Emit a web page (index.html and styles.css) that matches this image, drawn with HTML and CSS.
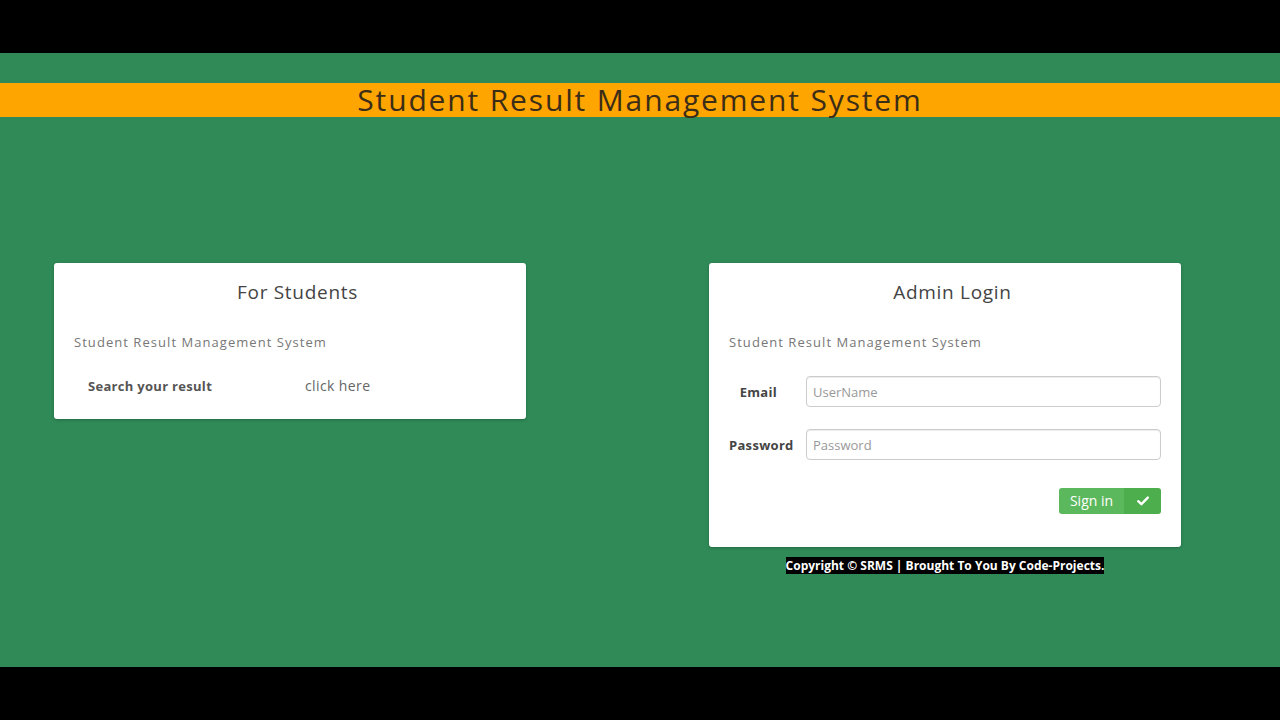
FILE: index.html
```html
<!DOCTYPE html>
<html>
<head>
<meta charset="utf-8">
<link rel="stylesheet" href="styles.css">
</head>
<body>
<div class="bar"></div>
<main class="page">
  <h1 class="banner">Student Result Management System</h1>
  <div class="cards">
    <section class="card student">
      <h2 class="card-title">For Students</h2>
      <p class="card-sub">Student Result Management System</p>
      <div class="search-row">
        <span class="search-label">Search your result</span>
        <a class="search-link">click here</a>
      </div>
    </section>
    <div class="admin-col">
      <section class="card admin">
        <h2 class="card-title">Admin Login</h2>
        <p class="card-sub">Student Result Management System</p>
        <div class="form-row email-row">
          <label class="form-label">Email</label>
          <input class="form-input" type="text" placeholder="UserName">
        </div>
        <div class="form-row pass-row">
          <label class="form-label">Password</label>
          <input class="form-input" type="password" placeholder="Password">
        </div>
        <div class="btn-row">
          <button class="btn-sign"><span class="btn-text">Sign in</span><span class="btn-icon"><svg width="12" height="10" viewBox="0 0 12 10"><path d="M1.2 5.2 L4.4 8.2 L10.8 1.6" fill="none" stroke="#fff" stroke-width="2.4" stroke-linecap="round" stroke-linejoin="round"/></svg></span></button>
        </div>
      </section>
      <p class="copyright"><span class="copy-mark">Copyright © SRMS | Brought To You By Code-Projects.</span></p>
    </div>
  </div>
</main>
<div class="bar"></div>
</body>
</html>
```
FILE: styles.css
```css
html, body {
  margin: 0;
  padding: 0;
  background: #000;
}
body {
  width: 1280px;
  height: 720px;
  overflow: hidden;
  font-family: "Open Sans", "Noto Sans", sans-serif;
}
.bar {
  height: 53px;
  background: #000;
}
.page {
  height: 614px;
  background: #2f8a57;
  padding-top: 30px;
  box-sizing: border-box;
}
.banner {
  margin: 0;
  height: 34px;
  background: #ffa500;
  text-align: center;
  font-weight: 400;
  font-size: 30px;
  line-height: 34px;
  color: #3b2d17;
  letter-spacing: 1.85px;
}
.cards {
  display: flex;
  align-items: flex-start;
  padding-left: 54px;
  gap: 183px;
  margin-top: 146px;
}
.card {
  width: 472px;
  background: #fff;
  border-radius: 3px;
  box-shadow: 0 1px 3px rgba(0,0,0,0.25);
  box-sizing: border-box;
  padding: 16px 20px 0 20px;
}
.card-title {
  margin: 0;
  text-align: center;
  font-weight: 400;
  font-size: 19px;
  line-height: 26px;
  color: #444;
  letter-spacing: 0.7px;
  padding-left: 15px;
}
.card-sub {
  margin: 28px 0 0 0;
  font-size: 13px;
  line-height: 18px;
  color: #777;
  letter-spacing: 1.05px;
}
.student {
  height: 156px;
}
.search-row {
  display: flex;
  margin-top: 25px;
  padding-left: 14px;
  align-items: center;
}
.search-label {
  width: 217px;
  font-weight: 700;
  font-size: 13px;
  color: #555;
  letter-spacing: 0.3px;
}
.search-link {
  font-size: 14px;
  color: #666;
  letter-spacing: 0.4px;
}
.admin {
  height: 284px;
}
.form-row {
  display: flex;
  align-items: center;
}
.email-row {
  margin-top: 25px;
}
.pass-row {
  margin-top: 22px;
}
.form-label {
  text-align: right;
  box-sizing: border-box;
  width: 77px;
  font-weight: 700;
  font-size: 13px;
  color: #444;
  letter-spacing: 0.3px;
}
.email-row .form-label {
  padding-right: 29px;
}
.pass-row .form-label {
  text-align: left;
  padding-right: 0;
}
.form-input {
  width: 355px;
  height: 31px;
  box-sizing: border-box;
  border: 1px solid #ccc;
  border-radius: 4px;
  padding: 0 6px;
  font-family: inherit;
  font-size: 13px;
  color: #555;
  box-shadow: inset 0 1px 1px rgba(0,0,0,0.075);
}
.form-input::placeholder {
  color: #999;
}
.btn-row {
  display: flex;
  justify-content: flex-end;
  margin-top: 28px;
}
.btn-sign {
  display: flex;
  height: 26px;
  padding: 0;
  border: none;
  border-radius: 3px;
  overflow: hidden;
  font-family: inherit;
  cursor: pointer;
}
.btn-text {
  width: 65px;
  background: #5cb85c;
  color: #fff;
  font-size: 14px;
  line-height: 26px;
  text-align: center;
}
.btn-icon {
  width: 37px;
  background: #4cae4c;
  display: flex;
  align-items: center;
  justify-content: center;
}
.copyright {
  margin: 12px 0 0 0;
  text-align: center;
  width: 472px;
  font-size: 12px;
  line-height: 14px;
}
.copy-mark {
  background: #000;
  color: #fff;
  font-weight: 700;
}
```
